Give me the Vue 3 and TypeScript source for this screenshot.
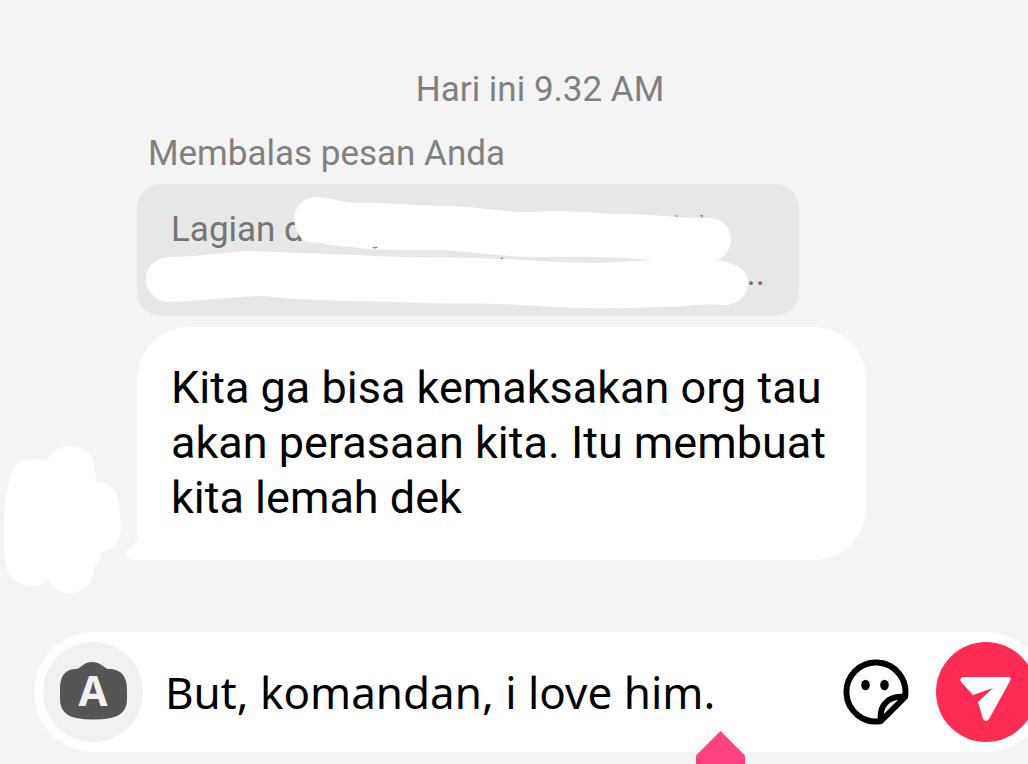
<script setup lang="ts">
import { ref } from 'vue'

const draft = ref<string>('But, komandan, i love him.')
const message = ['Kita ga bisa kemaksakan org tau', 'akan perasaan kita. Itu membuat', 'kita lemah dek']
</script>

<template>
  <main class="chat">
    <section class="thread">
      <time class="stamp">Hari ini 9.32 AM</time>
      <p class="reply-label">Membalas pesan Anda</p>

      <blockquote class="quote">
        <p>Lagian d</p>
        <p class="quote-end">..</p>
        <svg class="scribble" viewBox="0 0 662 132" aria-hidden="true">
          <path d="M157 34C159 20 168 13 181 13C195 14 208 19 222 19C250 18 273 22 309 22C344 23 371 29 397 28C426 25 451 29 483 30C514 30 540 34 569 34C585 33 594 43 594 56C593 68 587 74 579 76C590 77 611 83 611 97C611 112 601 121 587 121C563 120 551 121 539 123C515 122 497 125 474 124C437 125 410 122 383 121C340 118 302 121 262 118C218 117 172 117 127 112C90 113 60 117 33 118C17 117 9 107 9 95C9 82 19 74 32 73C62 73 87 68 112 67C151 68 188 70 221 71C261 74 303 73 339 74C379 75 419 79 463 79L515 76C484 73 447 72 414 73C370 74 334 67 300 66C258 66 232 66 216 63C198 63 184 58 172 58C162 56 158 46 157 34Z" />
          <path class="trace" d="M235 63Q238 66 241 63ZM538 32L540 31L541 33ZM563 31L566 31L565 34ZM363 75L366 73L366 75Z" />
        </svg>
      </blockquote>

      <div class="row">
        <svg class="avatar" viewBox="0 0 118 148" role="img" aria-label="Avatar">
          <path d="M26 13C32 12 37 13 42 15C48 5 56 0 66 0C82 1 91 10 91 24L92 36C107 36 114 44 115 60L117 79C117 94 110 104 97 106C98 113 94 118 90 121C90 138 80 147 65 147C54 147 48 141 44 134C37 139 29 142 21 139C8 137 2 126 1 115C-1 103 -2 87 0 74C1 58 3 44 6 31C10 19 16 14 26 13Z" />
        </svg>
        <div class="bubble">
          <svg class="tail" viewBox="0 0 40 24" aria-hidden="true"><path d="M11 0V4Q8 9 2 14Q-2 19 3 23Q5 24 8 24H40V0Z" /></svg>
          <p v-for="line in message" :key="line">{{ line }}</p>
        </div>
      </div>
    </section>

    <form class="composer" @submit.prevent>
      <button class="camera" type="button" aria-label="Kamera">
        <svg viewBox="0 0 100 100" aria-hidden="true">
          <path class="body" d="M34 27C39 25 41 20 49 20C57 20 60 25 65 27C79 27 84 35 84 48V57C84 69 77 74 68 76Q50 79 33 76C24 74 17 69 17 57V48C17 35 21 27 34 27Z" />
          <text class="mark" x="50" y="64" text-anchor="middle">A</text>
        </svg>
      </button>
      <input v-model="draft" class="draft" type="text" aria-label="Pesan" />
      <button class="sticker" type="button" aria-label="Stiker">
        <svg viewBox="0 0 66 66" aria-hidden="true">
          <path class="line" d="M38 62A29.500 29.500 0 1 1 62 38L38 62C36 49 43 36 62 38" />
          <ellipse cx="22.500" cy="26" rx="4.300" ry="5.300" /><ellipse cx="41.500" cy="26" rx="4.300" ry="5.300" />
        </svg>
      </button>
      <button class="send" type="submit" aria-label="Kirim">
        <svg viewBox="0 0 100 100" aria-hidden="true">
          <path d="M27 35H72Q76 35 74 39L53 77Q50 81 47 77L42 60L57 46L37 53L25 40Q23 36 27 35Z" />
        </svg>
      </button>
      <span class="handle" aria-hidden="true"></span>
    </form>
  </main>
</template>

<style>
body { margin: 0; background: #f4f4f4; }
</style>

<style scoped>
.chat {
  box-sizing: border-box;
  min-height: 100vh;
  padding: 68px 0 12px;
  display: flex;
  flex-direction: column;
  justify-content: space-between;
  gap: 36px;
  overflow: hidden;
  position: relative;
  background: #f4f4f4;
  color: #000;
  font-family: Roboto, "Liberation Sans", sans-serif;
}
p { margin: 0; }
.thread { display: flex; flex-direction: column; }
.stamp {
  padding-left: 52px;
  text-align: center;
  font-size: 35px;
  line-height: 44px;
  color: #808080;
}
.reply-label {
  margin: 20px 0 8px 148px;
  font-size: 35px;
  line-height: 44px;
  color: #808080;
}
.quote {
  position: relative;
  box-sizing: border-box;
  width: 662px;
  max-width: calc(100% - 160px);
  margin: 0 0 11px 137px;
  padding: 24px 34px 20px;
  border-radius: 24px;
  background: #e7e7e7;
  color: #757575;
  font-size: 35px;
  line-height: 44px;
}
.quote-end { text-align: right; }
.scribble { position: absolute; top: 0; left: 0; width: 662px; height: 132px; fill: #fff; }
.trace { fill: #858585; }
.row { display: flex; align-items: flex-start; gap: 15px; padding-left: 4px; }
.avatar { flex: none; width: 118px; height: 148px; margin-top: 119px; fill: #fff; }
.bubble {
  position: relative;
  box-sizing: border-box;
  width: 729px;
  padding: 33px 34px 35px;
  border-radius: 52px 52px 52px 0;
  background: #fff;
  font-size: 45px;
  line-height: 55px;
  white-space: nowrap;
}
.tail { position: absolute; bottom: 0; left: -11px; width: 40px; height: 24px; fill: #fff; }
.composer {
  position: relative;
  display: flex;
  align-items: center;
  box-sizing: border-box;
  height: 120px;
  margin: 0 -18px 0 34px;
  padding: 0 10px 0 9px;
  border-radius: 60px;
  background: #fff;
}
button { flex: none; padding: 0; border: 0; background: none; }
button svg { display: block; width: 100%; height: 100%; }
.camera { width: 100px; height: 100px; border-radius: 50%; background: #f1f1f1; }
.body { fill: #555; }
.mark { fill: #f1f1f1; font-family: "Noto Sans", sans-serif; font-size: 42px; font-weight: 700; }
.draft {
  flex: 1;
  min-width: 0;
  margin: 0 22px;
  padding: 0;
  border: 0;
  outline: 0;
  background: none;
  color: #000;
  font-family: "Noto Sans", "Liberation Sans", sans-serif;
  font-size: 44px;
  line-height: 60px;
}
.sticker { width: 66px; height: 66px; margin-right: 27px; }
.line { fill: none; stroke: #000; stroke-width: 6; stroke-linejoin: round; }
.send { width: 100px; height: 100px; border-radius: 50%; background: #fe2c55; }
.send svg { fill: #fff; }
.handle {
  position: absolute;
  top: 99px;
  left: 662px;
  width: 49px;
  height: 49px;
  background: #ff4081;
  clip-path: polygon(50% 0, 100% 50%, 100% 100%, 0 100%, 0 50%);
}
</style>
